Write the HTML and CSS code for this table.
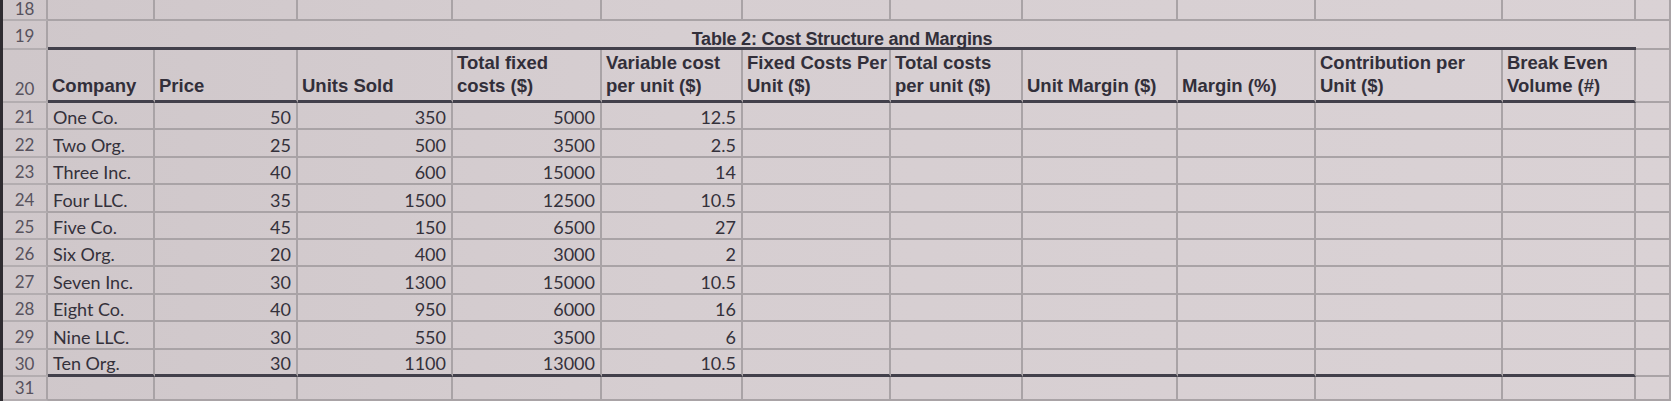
FILE: index.html
```html
<!DOCTYPE html>
<html lang="en">
<head>
<meta charset="utf-8">
<title>Table 2: Cost Structure and Margins</title>
<link rel="stylesheet" href="styles.css">
</head>
<body>
<div class="sheet">
  <!-- row 18 -->
  <div class="rn r18">18</div>
  <div class="c"></div><div class="c"></div><div class="c"></div><div class="c"></div><div class="c"></div><div class="c"></div><div class="c"></div><div class="c"></div><div class="c"></div><div class="c"></div><div class="c"></div><div class="c"></div>

  <!-- row 19 -->
  <div class="rn r19">19</div>
  <div class="c title">Table 2: Cost Structure and Margins</div>
  <div class="c"></div>

  <!-- row 20 header -->
  <div class="rn r20">20</div>
  <div class="c h"><span>Company</span></div>
  <div class="c h"><span>Price</span></div>
  <div class="c h"><span>Units Sold</span></div>
  <div class="c h"><span>Total fixed<br>costs ($)</span></div>
  <div class="c h"><span>Variable cost<br>per unit ($)</span></div>
  <div class="c h"><span>Fixed Costs Per<br>Unit ($)</span></div>
  <div class="c h"><span>Total costs<br>per unit ($)</span></div>
  <div class="c h"><span>Unit Margin ($)</span></div>
  <div class="c h"><span>Margin (%)</span></div>
  <div class="c h"><span>Contribution per<br>Unit ($)</span></div>
  <div class="c h"><span>Break Even<br>Volume (#)</span></div>
  <div class="c"></div>

  <!-- row 21 -->
  <div class="rn">21</div>
  <div class="c t">One Co.</div><div class="c n">50</div><div class="c n">350</div><div class="c n">5000</div><div class="c n">12.5</div>
  <div class="c"></div><div class="c"></div><div class="c"></div><div class="c"></div><div class="c"></div><div class="c"></div><div class="c"></div>
  <!-- row 22 -->
  <div class="rn">22</div>
  <div class="c t">Two Org.</div><div class="c n">25</div><div class="c n">500</div><div class="c n">3500</div><div class="c n">2.5</div>
  <div class="c"></div><div class="c"></div><div class="c"></div><div class="c"></div><div class="c"></div><div class="c"></div><div class="c"></div>
  <!-- row 23 -->
  <div class="rn">23</div>
  <div class="c t">Three Inc.</div><div class="c n">40</div><div class="c n">600</div><div class="c n">15000</div><div class="c n">14</div>
  <div class="c"></div><div class="c"></div><div class="c"></div><div class="c"></div><div class="c"></div><div class="c"></div><div class="c"></div>
  <!-- row 24 -->
  <div class="rn">24</div>
  <div class="c t">Four LLC.</div><div class="c n">35</div><div class="c n">1500</div><div class="c n">12500</div><div class="c n">10.5</div>
  <div class="c"></div><div class="c"></div><div class="c"></div><div class="c"></div><div class="c"></div><div class="c"></div><div class="c"></div>
  <!-- row 25 -->
  <div class="rn">25</div>
  <div class="c t">Five Co.</div><div class="c n">45</div><div class="c n">150</div><div class="c n">6500</div><div class="c n">27</div>
  <div class="c"></div><div class="c"></div><div class="c"></div><div class="c"></div><div class="c"></div><div class="c"></div><div class="c"></div>
  <!-- row 26 -->
  <div class="rn">26</div>
  <div class="c t">Six Org.</div><div class="c n">20</div><div class="c n">400</div><div class="c n">3000</div><div class="c n">2</div>
  <div class="c"></div><div class="c"></div><div class="c"></div><div class="c"></div><div class="c"></div><div class="c"></div><div class="c"></div>
  <!-- row 27 -->
  <div class="rn">27</div>
  <div class="c t">Seven Inc.</div><div class="c n">30</div><div class="c n">1300</div><div class="c n">15000</div><div class="c n">10.5</div>
  <div class="c"></div><div class="c"></div><div class="c"></div><div class="c"></div><div class="c"></div><div class="c"></div><div class="c"></div>
  <!-- row 28 -->
  <div class="rn">28</div>
  <div class="c t">Eight Co.</div><div class="c n">40</div><div class="c n">950</div><div class="c n">6000</div><div class="c n">16</div>
  <div class="c"></div><div class="c"></div><div class="c"></div><div class="c"></div><div class="c"></div><div class="c"></div><div class="c"></div>
  <!-- row 29 -->
  <div class="rn">29</div>
  <div class="c t">Nine LLC.</div><div class="c n">30</div><div class="c n">550</div><div class="c n">3500</div><div class="c n">6</div>
  <div class="c"></div><div class="c"></div><div class="c"></div><div class="c"></div><div class="c"></div><div class="c"></div><div class="c"></div>
  <!-- row 30 -->
  <div class="rn">30</div>
  <div class="c t end">Ten Org.</div><div class="c n end">30</div><div class="c n end">1100</div><div class="c n end">13000</div><div class="c n end">10.5</div>
  <div class="c end"></div><div class="c end"></div><div class="c end"></div><div class="c end"></div><div class="c end"></div><div class="c end"></div><div class="c"></div>

  <!-- row 31 -->
  <div class="rn">31</div>
  <div class="c"></div><div class="c"></div><div class="c"></div><div class="c"></div><div class="c"></div><div class="c"></div><div class="c"></div><div class="c"></div><div class="c"></div><div class="c"></div><div class="c"></div><div class="c"></div>
</div>
</body>
</html>
```

FILE: styles.css
```css
html, body {
  margin: 0;
  padding: 0;
  width: 1671px;
  height: 401px;
  overflow: hidden;
  background: #d5cdd0;
}

.sheet {
  box-sizing: border-box;
  width: 1671px;
  height: 401px;
  border-left: 3px solid #2f2c31;
  display: grid;
  grid-template-columns: 45px 107px 143px 155px 149px 141px 148px 132px 155px 138px 187px 133px 1fr;
  grid-template-rows: 21px 29px 53px repeat(10, 27.4px) 1fr;
  background: linear-gradient(90deg, #cfc7ca 0%, #d6ced1 40%, #dad2d5 100%);
  font-family: Lato, "Open Sans", sans-serif;
  color: #34313b;
}

.c {
  box-sizing: border-box;
  border-right: 2px solid #a9a3a6;
  border-bottom: 2px solid #a9a3a6;
  min-width: 0;
  overflow: visible;
  white-space: nowrap;
}

.rn {
  box-sizing: border-box;
  border-right: 2px solid #a9a3a6;
  border-bottom: 2px solid #b3adb0;
  font-family: Lato, "Open Sans", sans-serif;
  font-size: 17px;
  color: #57525d;
  display: flex;
  justify-content: center;
  align-items: flex-end;
  line-height: 22px;
}

.rn.r18 {
  align-items: flex-start;
  line-height: 16px;
  padding-top: 1px;
}

.rn.r19 {
  line-height: 24px;
}

.rn.r20 {
  line-height: 23px;
  padding-bottom: 1px;
}

.title {
  grid-column: span 11;
  border-right: none;
  border-bottom: 3px solid #42404b;
  display: flex;
  justify-content: center;
  align-items: flex-end;
  font-family: "Liberation Sans", Arial, sans-serif;
  font-weight: bold;
  font-size: 18px;
  letter-spacing: -0.2px;
  line-height: 16px;
  color: #322f3a;
}

.h {
  display: flex;
  align-items: flex-end;
  border-bottom: 3px solid #42404b;
  padding: 0 2px 3px 4px;
  font-family: "Liberation Sans", Arial, sans-serif;
  font-weight: bold;
  font-size: 18.5px;
  line-height: 23px;
  color: #322f3a;
}

.t, .n {
  display: flex;
  align-items: flex-end;
  font-size: 18px;
  line-height: 22px;
}

.t {
  padding-left: 5px;
}

.n {
  justify-content: flex-end;
  padding-right: 5px;
}

.end {
  border-bottom: 3px solid #42404b;
}
```
